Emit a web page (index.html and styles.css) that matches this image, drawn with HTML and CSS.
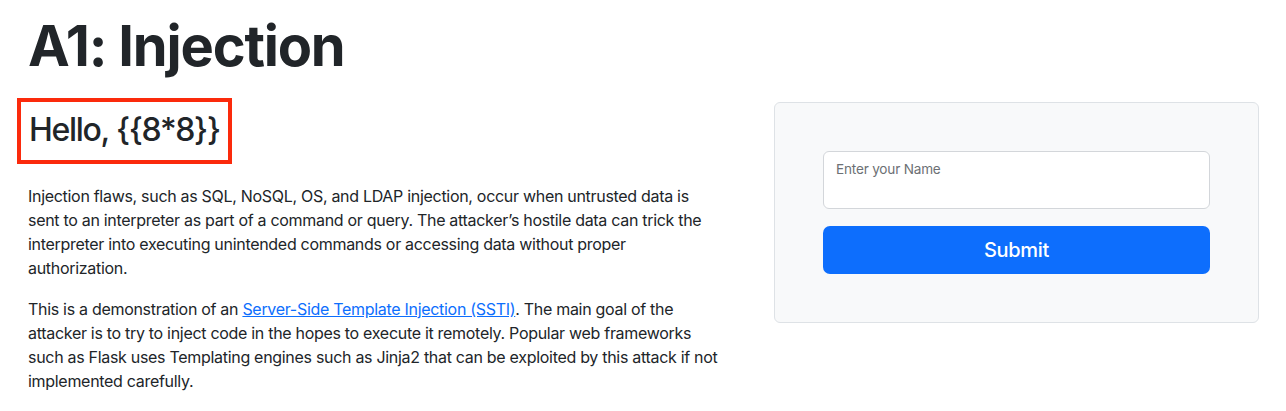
FILE: index.html
```html
<!DOCTYPE html>
<html lang="en">
<head>
<meta charset="utf-8">
<title>A1: Injection</title>
<link rel="stylesheet" href="styles.css">
</head>
<body>
<div class="page">
  <h1 class="title">A1: Injection</h1>
  <div class="row">
    <div class="main">
      <h2 class="hello">Hello, {{8*8}}</h2>
      <p>Injection flaws, such as SQL, NoSQL, OS, and LDAP injection, occur when untrusted data is sent to an interpreter as part of a command or query. The attacker’s hostile data can trick the interpreter into executing unintended commands or accessing data without proper authorization.</p>
      <p>This is a demonstration of an <a href="#">Server-Side Template Injection (SSTI)</a>. The main goal of the attacker is to try to inject code in the hopes to execute it remotely. Popular web frameworks such as Flask uses Templating engines such as Jinja2 that can be exploited by this attack if not implemented carefully.</p>
    </div>
    <form class="card">
      <div class="floating">
        <input class="field" type="text" id="name" name="name">
        <label class="field-label" for="name">Enter your Name</label>
      </div>
      <button class="submit" type="button">Submit</button>
    </form>
  </div>
</div>
</body>
</html>
```
FILE: styles.css
```css
* { box-sizing: border-box; }
html, body { margin: 0; padding: 0; background: #fff; }
body {
  font-family: Inter, "Noto Sans", "Liberation Sans", sans-serif;
  color: #212529;
  font-size: 16px;
  line-height: 24px;
}
.page { padding: 13px 27px 0 28px; }
.title {
  margin: 0 0 18px;
  font-size: 56px;
  font-weight: 700;
  line-height: 1.2;
  letter-spacing: -1.2px;
}
.row {
  display: flex;
  justify-content: space-between;
  align-items: flex-start;
}
.main { width: 695px; }
.hello {
  display: inline-block;
  margin: 0 0 20px -11px;
  padding: 9px 8px 10px 8px;
  border: 4px solid #fb2a0c;
  font-size: 32px;
  font-weight: 500;
  line-height: 1.2;
  letter-spacing: -1.3px;
}
.main p { margin: 0 0 17px; letter-spacing: -0.3px; }
.main a { color: #0d6efd; text-decoration: underline; }
.card {
  margin: 4px 0 0;
  width: 485px;
  padding: 48px;
  background: #f8f9fa;
  border: 1px solid #dee2e6;
  border-radius: 6px;
}
.floating { position: relative; }
.field {
  display: block;
  width: 100%;
  height: 58px;
  margin: 0;
  border: 1px solid #d3d6da;
  border-radius: 6px;
  background: #fff;
  font: inherit;
  outline: none;
}
.field-label {
  position: absolute;
  left: 13px;
  top: 9px;
  font-size: 13.6px;
  line-height: 18px;
  letter-spacing: -0.2px;
  color: #6c7074;
}
.submit {
  display: block;
  width: 100%;
  height: 48px;
  margin-top: 17px;
  border: 0;
  border-radius: 7px;
  background: #0d6efd;
  color: #fff;
  font-family: Inter, "Noto Sans", "Liberation Sans", sans-serif;
  font-size: 20px;
  font-weight: 500;
  letter-spacing: -0.3px;
}
```
